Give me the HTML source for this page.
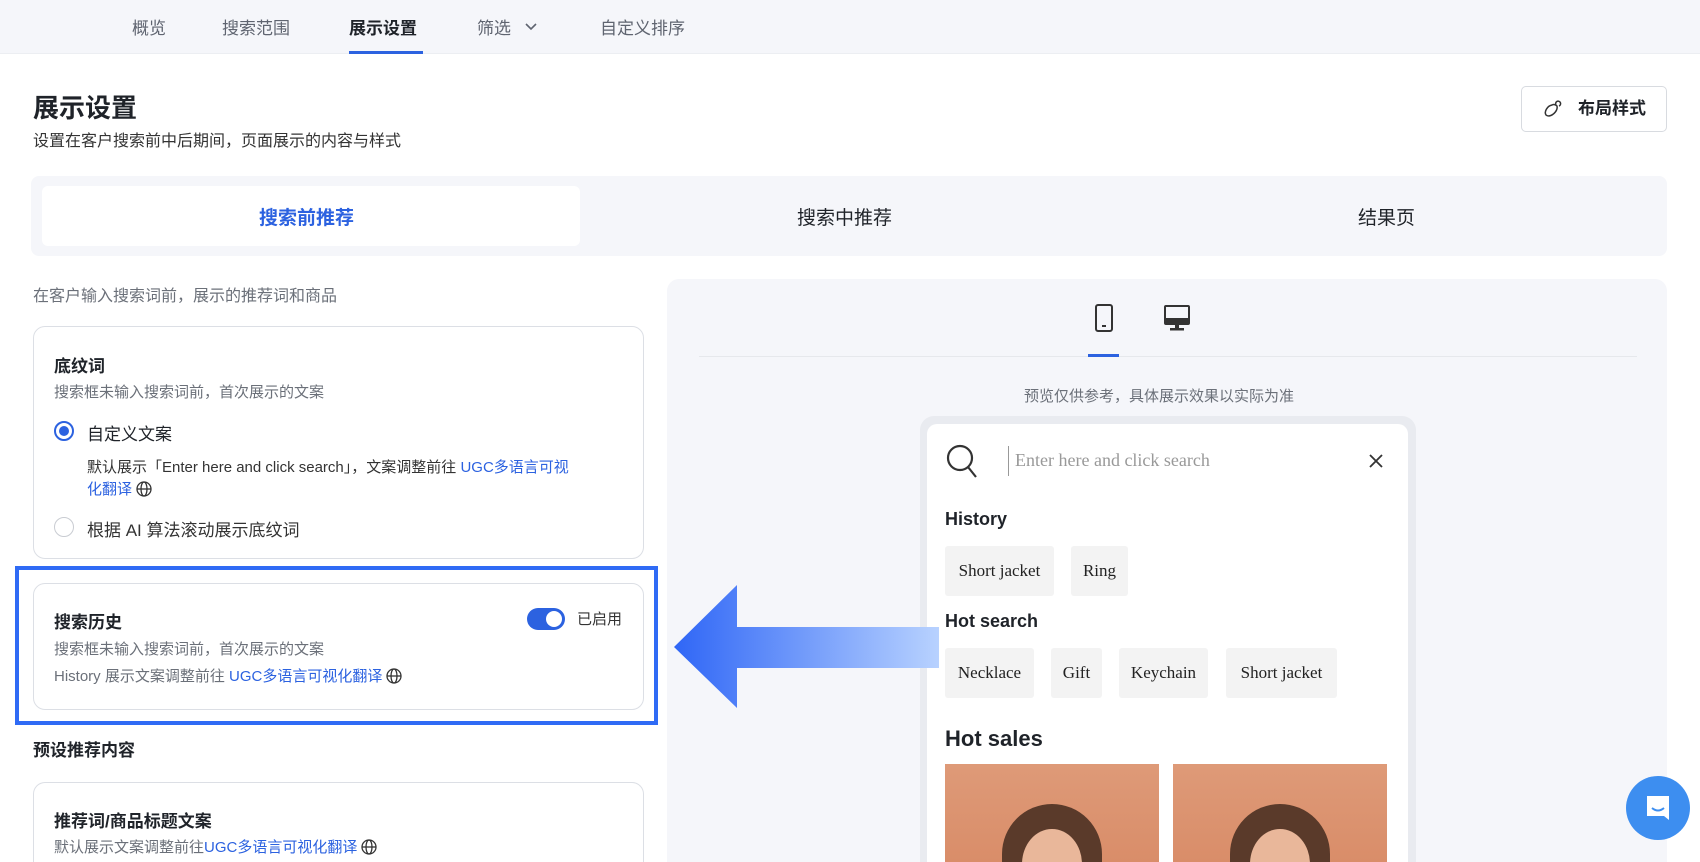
<!DOCTYPE html>
<html><head><meta charset="utf-8"><style>
*{box-sizing:border-box;margin:0;padding:0}
html{overflow:hidden;width:1700px;height:862px}
body{width:1700px;height:862px;overflow:hidden;background:#fff;font-family:"Liberation Sans","Noto Sans CJK SC",sans-serif;color:#1f2329;position:relative}
.a{position:absolute;white-space:nowrap}
.nav{position:absolute;left:0;top:0;width:1700px;height:54px;background:#f5f6fa;border-bottom:1px solid #eceef2}
.nav span{position:absolute;top:14px;font-size:17px;color:#5f6470}
.card{position:absolute;left:33px;width:611px;border:1px solid #dcdfe5;border-radius:12px;background:#fff}
.g{color:#6b7079}
.blue{color:#2c62e0}
.chip{position:absolute;height:50px;background:#f3f3f3;border-radius:3px;font-family:"Liberation Serif",serif;font-size:17px;color:#222;line-height:50px;text-align:center}
.serif{font-family:"Liberation Serif",serif}
.gl{display:inline-block;vertical-align:-3px;margin-left:4px}
</style></head><body>
<div class="nav">
<span style="left:132px">概览</span>
<span style="left:222px">搜索范围</span>
<span style="left:349px;color:#1f2329;font-weight:600">展示设置</span>
<span style="left:477px">筛选</span>
<svg class="a" style="left:524px;top:22px" width="14" height="10"><path d="M2 2l5 5 5-5" stroke="#5f6470" stroke-width="1.6" fill="none"/></svg>
<span style="left:600px">自定义排序</span>
<div class="a" style="left:349px;top:51px;width:74px;height:3px;background:#2c62e0"></div>
</div>
<div class="a" style="left:33px;top:88px;font-size:26px;font-weight:700">展示设置</div>
<div class="a" style="left:33px;top:127px;font-size:16px;color:#333">设置在客户搜索前中后期间，页面展示的内容与样式</div>
<div class="a" style="left:1521px;top:86px;width:146px;height:46px;border:1px solid #d8dbe0;border-radius:5px;font-size:17px;font-weight:600;line-height:44px;padding-left:56px">布局样式</div>
<svg class="a" style="left:1543px;top:100px" width="20" height="18"><path d="M3 15c-2-3 1-9 6-10 2-1 4 0 5 1 1 4-3 9-8 10-1 0-2 0-3-1z M13 5a2.5 2.5 0 1 1 3 1" stroke="#333" stroke-width="1.5" fill="none"/></svg>

<div class="a" style="left:31px;top:176px;width:1636px;height:80px;background:#f5f6fa;border-radius:8px"></div>
<div class="a" style="left:42px;top:186px;width:538px;height:60px;background:#fff;border-radius:6px"></div>
<div class="a" style="left:259px;top:203px;font-size:19px;font-weight:700;color:#2c62e0">搜索前推荐</div>
<div class="a" style="left:797px;top:203px;font-size:19px">搜索中推荐</div>
<div class="a" style="left:1358px;top:203px;font-size:19px">结果页</div>

<div class="a g" style="left:33px;top:282px;font-size:16px">在客户输入搜索词前，展示的推荐词和商品</div>

<div class="card" style="top:326px;height:233px">
<div class="a" style="left:20px;top:25px;font-size:17px;font-weight:700">底纹词</div>
<div class="a g" style="left:20px;top:54px;font-size:15px">搜索框未输入搜索词前，首次展示的文案</div>
<div class="a" style="left:20px;top:94px;width:20px;height:20px;border:2px solid #2c62e0;border-radius:50%"><div style="margin:3px;width:10px;height:10px;border-radius:50%;background:#2c62e0"></div></div>
<div class="a" style="left:53px;top:93px;font-size:17px">自定义文案</div>
<div class="a" style="left:53px;top:129px;font-size:15px;color:#333">默认展示「Enter here and click search」，文案调整前往 <span class="blue">UGC多语言可视</span></div>
<div class="a" style="left:53px;top:151px;font-size:15px"><span class="blue">化翻译</span><svg class="gl" width="16" height="16"><circle cx="8" cy="8" r="7" stroke="#333" stroke-width="1.3" fill="none"/><ellipse cx="8" cy="8" rx="3" ry="7" stroke="#333" stroke-width="1.3" fill="none"/><path d="M1 8h14" stroke="#333" stroke-width="1.3"/></svg></div>
<div class="a" style="left:20px;top:190px;width:20px;height:20px;border:1px solid #c9ccd2;border-radius:50%"></div>
<div class="a" style="left:53px;top:189px;font-size:17px;color:#333">根据 AI 算法滚动展示底纹词</div>
</div>

<div class="card" style="top:583px;height:127px">
<div class="a" style="left:20px;top:24px;font-size:17px;font-weight:700">搜索历史</div>
<div class="a" style="left:493px;top:24px;width:38px;height:22px;background:#2c62e0;border-radius:11px"><div style="position:absolute;right:3px;top:3px;width:16px;height:16px;border-radius:50%;background:#fff"></div></div>
<div class="a" style="left:543px;top:24px;font-size:15px;color:#333">已启用</div>
<div class="a g" style="left:20px;top:54px;font-size:15px">搜索框未输入搜索词前，首次展示的文案</div>
<div class="a g" style="left:20px;top:81px;font-size:15px">History 展示文案调整前往 <span class="blue">UGC多语言可视化翻译</span><svg class="gl" width="16" height="16"><circle cx="8" cy="8" r="7" stroke="#333" stroke-width="1.3" fill="none"/><ellipse cx="8" cy="8" rx="3" ry="7" stroke="#333" stroke-width="1.3" fill="none"/><path d="M1 8h14" stroke="#333" stroke-width="1.3"/></svg></div>
</div>
<div class="a" style="left:15px;top:566px;width:643px;height:159px;border:4px solid #2f6bf5"></div>

<div class="a" style="left:33px;top:736px;font-size:17px;font-weight:700">预设推荐内容</div>
<div class="card" style="top:782px;height:80px;border-bottom:none;border-radius:12px 12px 0 0">
<div class="a" style="left:20px;top:24px;font-size:17px;font-weight:700">推荐词/商品标题文案</div>
<div class="a g" style="left:20px;top:53px;font-size:15px">默认展示文案调整前往<span class="blue">UGC多语言可视化翻译</span><svg class="gl" width="16" height="16"><circle cx="8" cy="8" r="7" stroke="#333" stroke-width="1.3" fill="none"/><ellipse cx="8" cy="8" rx="3" ry="7" stroke="#333" stroke-width="1.3" fill="none"/><path d="M1 8h14" stroke="#333" stroke-width="1.3"/></svg></div>
</div>

<div class="a" style="left:667px;top:279px;width:1000px;height:583px;background:#f5f6fa;border-radius:12px 12px 0 0"></div>
<svg class="a" style="left:1093px;top:303px" width="22" height="30"><rect x="3" y="2" width="16" height="26" rx="2" stroke="#333" stroke-width="2" fill="none"/><rect x="9" y="22" width="4" height="2" fill="#333"/></svg>
<svg class="a" style="left:1163px;top:304px" width="28" height="28"><rect x="2" y="2" width="24" height="18" rx="1" stroke="#333" stroke-width="2" fill="none"/><rect x="3" y="14" width="22" height="5" fill="#333"/><rect x="12" y="20" width="4" height="4" fill="#333"/><rect x="7" y="24" width="14" height="2.5" fill="#333"/></svg>
<div class="a" style="left:699px;top:356px;width:938px;height:1px;background:#e6e8ec"></div>
<div class="a" style="left:1088px;top:354px;width:31px;height:3px;background:#2c62e0"></div>
<div class="a g" style="left:1024px;top:385px;font-size:15px">预览仅供参考，具体展示效果以实际为准</div>

<div class="a" style="left:920px;top:416px;width:496px;height:446px;background:#e9ebf0;border-radius:14px 14px 0 0"></div>
<div class="a" style="left:927px;top:424px;width:481px;height:438px;background:#fff;border-radius:10px 10px 0 0"></div>
<svg class="a" style="left:945px;top:443px" width="36" height="38"><circle cx="15" cy="15" r="12" stroke="#333" stroke-width="2.2" fill="none"/><path d="M23 24l8 10" stroke="#333" stroke-width="2.2"/></svg>
<div class="a" style="left:1008px;top:446px;width:1px;height:30px;background:#999"></div>
<div class="a serif" style="left:1015px;top:450px;font-size:18px;color:#999">Enter here and click search</div>
<svg class="a" style="left:1368px;top:453px" width="16" height="16"><path d="M2 2l12 12M14 2L2 14" stroke="#333" stroke-width="1.8"/></svg>
<div class="a" style="left:945px;top:509px;font-size:18px;font-weight:600">History</div>
<div class="chip" style="left:945px;top:546px;width:109px">Short jacket</div>
<div class="chip" style="left:1071px;top:546px;width:57px">Ring</div>
<div class="a" style="left:945px;top:611px;font-size:18px;font-weight:600">Hot search</div>
<div class="chip" style="left:945px;top:648px;width:89px">Necklace</div>
<div class="chip" style="left:1051px;top:648px;width:51px">Gift</div>
<div class="chip" style="left:1119px;top:648px;width:89px">Keychain</div>
<div class="chip" style="left:1226px;top:648px;width:111px">Short jacket</div>
<div class="a" style="left:945px;top:726px;font-size:22px;font-weight:600">Hot sales</div>
<div class="a" style="left:945px;top:764px;width:214px;height:98px;overflow:hidden;background:linear-gradient(180deg,#de9a78,#d98d69)"><div style="position:absolute;left:57px;top:40px;width:100px;height:100px;border-radius:50% 50% 0 0;background:#5a3a2a"></div><div style="position:absolute;left:77px;top:65px;width:60px;height:70px;border-radius:50%;background:#e9b79a"></div></div>
<div class="a" style="left:1173px;top:764px;width:214px;height:98px;overflow:hidden;background:linear-gradient(180deg,#de9a78,#d98d69)"><div style="position:absolute;left:57px;top:40px;width:100px;height:100px;border-radius:50% 50% 0 0;background:#5a3a2a"></div><div style="position:absolute;left:77px;top:65px;width:60px;height:70px;border-radius:50%;background:#e9b79a"></div></div>

<svg class="a" style="left:670px;top:580px" width="275" height="132"><defs><linearGradient id="ag" x1="0" x2="1"><stop offset="0" stop-color="#2f66f6"/><stop offset="1" stop-color="#b8d2ff"/></linearGradient></defs><path d="M4 67L67 5V47H269V88H67V128Z" fill="url(#ag)"/></svg>

<div class="a" style="left:1626px;top:776px;width:64px;height:64px;border-radius:50%;background:#3d8ef0"></div>
<svg class="a" style="left:1643px;top:792px" width="30" height="32"><path d="M4 4h22v24l-5-4H4z" fill="#fff"/><path d="M9 16q6 5 12 0" stroke="#3d8ef0" stroke-width="2" fill="none"/></svg>
</body></html>
